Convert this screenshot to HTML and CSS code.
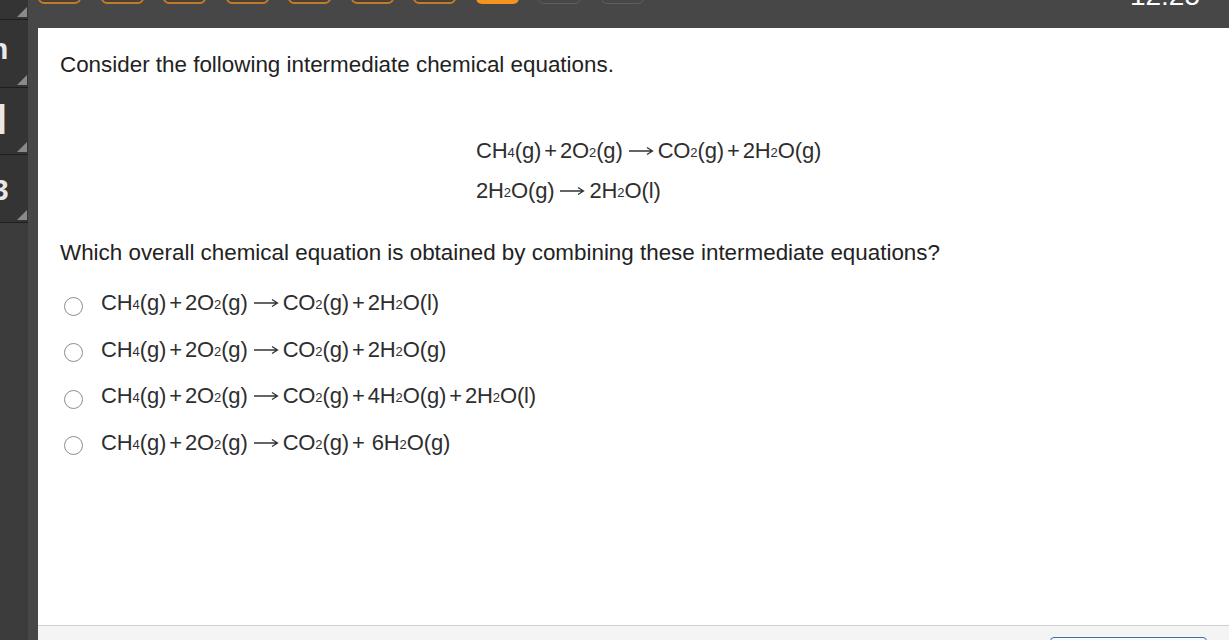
FILE: index.html
```html
<!DOCTYPE html>
<html lang="en">
<head>
<meta charset="utf-8">
<title>Question</title>
<link rel="stylesheet" href="styles.css">
</head>
<body>
<div class="app">
  <nav class="side">
    <div class="item i1"><span class="tri"></span></div>
    <div class="item i2"><span class="glyph">n</span><span class="tri"></span></div>
    <div class="item i3"><span class="glyph">l</span><span class="tri"></span></div>
    <div class="item i4"><span class="glyph">3</span><span class="tri"></span></div>
  </nav>
  <div class="main">
    <header class="topbar">
      <div class="pages">
        <span class="pg done"></span>
        <span class="pg done"></span>
        <span class="pg done"></span>
        <span class="pg done"></span>
        <span class="pg done"></span>
        <span class="pg done"></span>
        <span class="pg done"></span>
        <span class="pg cur"></span>
        <span class="pg todo"></span>
        <span class="pg todo"></span>
      </div>
      <div class="clock">12:25</div>
    </header>
    <div class="body">
      <div class="panel">
        <div class="content">
          <p class="q first">Consider the following intermediate chemical equations.</p>
          <div class="eqs">
            <div class="eq">CH<sub>4</sub>(g)<span class="op">+</span>2O<sub>2</sub>(g)<svg class="arr" width="26" height="10" viewBox="0 0 26 10"><path d="M1 5H24M19 1.5L24.5 5L19 8.5" fill="none" stroke="#333" stroke-width="1.3"/></svg>CO<sub>2</sub>(g)<span class="op">+</span>2H<sub>2</sub>O(g)</div>
            <div class="eq">2H<sub>2</sub>O(g)<svg class="arr" width="26" height="10" viewBox="0 0 26 10"><path d="M1 5H24M19 1.5L24.5 5L19 8.5" fill="none" stroke="#333" stroke-width="1.3"/></svg>2H<sub>2</sub>O(l)</div>
          </div>
          <p class="q second">Which overall chemical equation is obtained by combining these intermediate equations?</p>
          <ul class="opts">
            <li class="opt"><span class="radio"></span><span class="eq">CH<sub>4</sub>(g)<span class="op">+</span>2O<sub>2</sub>(g)<svg class="arr" width="26" height="10" viewBox="0 0 26 10"><path d="M1 5H24M19 1.5L24.5 5L19 8.5" fill="none" stroke="#333" stroke-width="1.3"/></svg>CO<sub>2</sub>(g)<span class="op">+</span>2H<sub>2</sub>O(l)</span></li>
            <li class="opt"><span class="radio"></span><span class="eq">CH<sub>4</sub>(g)<span class="op">+</span>2O<sub>2</sub>(g)<svg class="arr" width="26" height="10" viewBox="0 0 26 10"><path d="M1 5H24M19 1.5L24.5 5L19 8.5" fill="none" stroke="#333" stroke-width="1.3"/></svg>CO<sub>2</sub>(g)<span class="op">+</span>2H<sub>2</sub>O(g)</span></li>
            <li class="opt"><span class="radio"></span><span class="eq">CH<sub>4</sub>(g)<span class="op">+</span>2O<sub>2</sub>(g)<svg class="arr" width="26" height="10" viewBox="0 0 26 10"><path d="M1 5H24M19 1.5L24.5 5L19 8.5" fill="none" stroke="#333" stroke-width="1.3"/></svg>CO<sub>2</sub>(g)<span class="op">+</span>4H<sub>2</sub>O(g)<span class="op">+</span>2H<sub>2</sub>O(l)</span></li>
            <li class="opt"><span class="radio"></span><span class="eq">CH<sub>4</sub>(g)<span class="op">+</span>2O<sub>2</sub>(g)<svg class="arr" width="26" height="10" viewBox="0 0 26 10"><path d="M1 5H24M19 1.5L24.5 5L19 8.5" fill="none" stroke="#333" stroke-width="1.3"/></svg>CO<sub>2</sub>(g)<span class="op wide">+</span>6H<sub>2</sub>O(g)</span></li>
          </ul>
        </div>
        <footer class="foot"><span class="btn"></span></footer>
      </div>
    </div>
  </div>
</div>
</body>
</html>
```

FILE: styles.css
```css
html, body {
  margin: 0;
  padding: 0;
  width: 1229px;
  height: 640px;
  overflow: hidden;
  background: #474747;
  font-family: "Liberation Sans", Arial, sans-serif;
}

.app {
  display: flex;
  width: 1229px;
  height: 640px;
}

/* left navigation */
.side {
  width: 28px;
  flex: none;
  background: #3c3c3c;
  display: flex;
  flex-direction: column;
}
.item {
  position: relative;
  box-sizing: border-box;
  background: #343434;
  border-bottom: 1px solid #1e1e1e;
  overflow: hidden;
}
.i1 { height: 20px; }
.i2 { height: 68px; }
.i3 { height: 67px; }
.i4 { height: 68px; }
.glyph {
  display: block;
  color: #e8e8e8;
  font-weight: bold;
  font-size: 30px;
  line-height: 30px;
}
.i2 .glyph { margin: 14px 0 0 -10px; }
.i3 .glyph { margin: 12px 0 0 -4px; font-size: 40px; line-height: 40px; }
.i4 .glyph { margin: 20px 0 0 -8px; }
.tri {
  position: absolute;
  right: 1px;
  bottom: 2px;
  width: 0;
  height: 0;
  border-left: 10px solid transparent;
  border-bottom: 10px solid #8a8a8a;
}

/* main */
.main {
  flex: 1;
  display: flex;
  flex-direction: column;
}
.topbar {
  height: 28px;
  flex: none;
  background: #474747;
  display: flex;
  justify-content: space-between;
  align-items: flex-start;
  padding: 0 29px 0 10px;
  overflow: hidden;
}
.pages {
  display: flex;
  gap: 19.5px;
}
.pg {
  box-sizing: border-box;
  width: 43px;
  height: 24px;
  margin-top: -20px;
  border-radius: 6px;
}
.done {
  border: 2px solid #c07a2c;
  background: #4a4036;
}
.cur {
  background: #f5931f;
}
.todo {
  border: 1px solid #5f5f5f;
}
.clock {
  color: #ffffff;
  font-size: 28px;
  line-height: 28px;
  margin-top: -18px;
}

.body {
  flex: 1;
  display: flex;
  padding-left: 10px;
  background: #474747;
}
.panel {
  flex: 1;
  display: flex;
  flex-direction: column;
  background: #ffffff;
}
.content {
  flex: 1;
  padding: 25px 0 0 22px;
  color: #222;
}
.q {
  margin: 0;
  font-size: 22.4px;
  line-height: 24px;
}
.eqs {
  margin: 54px 0 0 416px;
}
.eq {
  font-family: "Liberation Sans", Arial, sans-serif;
  font-size: 22px;
  color: #2e2e2e;
  letter-spacing: -0.15px;
  white-space: nowrap;
}
.eqs .eq {
  height: 40px;
  line-height: 40px;
}
.eq sub {
  font-size: 13px;
  vertical-align: 1px;
  letter-spacing: 0;
}
.op {
  margin: 0 3px;
}
.op.wide {
  margin: 0 7px 0 3px;
}
.arr {
  margin: 0 4px 0 5px;
  vertical-align: 2px;
}
.second {
  margin-top: 30px;
}
.opts {
  list-style: none;
  margin: 16px 0 0 0;
  padding: 0;
}
.opt {
  height: 46.5px;
  display: flex;
  align-items: center;
}
.radio {
  box-sizing: border-box;
  width: 19px;
  height: 19px;
  border: 1px solid #8c8c8c;
  border-radius: 50%;
  background: #fff;
  margin: 4px 18px 0 4px;
  flex: none;
}
.opt .eq {
  line-height: 24px;
}

.foot {
  height: 14px;
  flex: none;
  border-top: 1px solid #cfcfcf;
  background: #f4f4f4;
  display: flex;
  justify-content: flex-end;
  overflow: hidden;
}
.btn {
  box-sizing: border-box;
  width: 157px;
  height: 30px;
  margin: 11px 22px 0 0;
  border: 1px solid #3c6fa8;
  border-radius: 4px;
  background: #f7f9fc;
}
```
